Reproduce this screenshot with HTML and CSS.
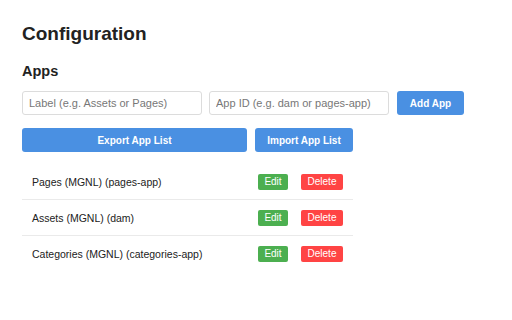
FILE: index.html
```html
<!DOCTYPE html>
<html>
<head>
<meta charset="utf-8">
<link rel="stylesheet" href="styles.css">
</head>
<body>
<div class="page">
  <h1 class="title">Configuration</h1>
  <h2 class="section">Apps</h2>
  <div class="form-row">
    <input class="field" type="text" placeholder="Label (e.g. Assets or Pages)">
    <input class="field field-id" type="text" placeholder="App ID (e.g. dam or pages-app)">
    <button class="btn btn-blue btn-add">Add App</button>
  </div>
  <div class="io-row">
    <button class="btn btn-blue btn-export">Export App List</button>
    <button class="btn btn-blue btn-import">Import App List</button>
  </div>
  <ul class="app-list">
    <li class="app-row">
      <span class="app-name">Pages (MGNL) (pages-app)</span>
      <div class="actions"><button class="btn btn-small btn-green">Edit</button><button class="btn btn-small btn-red">Delete</button></div>
    </li>
    <li class="app-row">
      <span class="app-name">Assets (MGNL) (dam)</span>
      <div class="actions"><button class="btn btn-small btn-green">Edit</button><button class="btn btn-small btn-red">Delete</button></div>
    </li>
    <li class="app-row last">
      <span class="app-name">Categories (MGNL) (categories-app)</span>
      <div class="actions"><button class="btn btn-small btn-green">Edit</button><button class="btn btn-small btn-red">Delete</button></div>
    </li>
  </ul>
</div>
</body>
</html>
```

FILE: styles.css
```css
* { box-sizing: border-box; }
html, body {
  margin: 0;
  padding: 0;
  background: #ffffff;
  font-family: "Liberation Sans", Arial, sans-serif;
  color: #222222;
}
.page {
  padding: 22px 0 0 22px;
}
.title {
  margin: 0;
  font-size: 19px;
  line-height: 24px;
  font-weight: bold;
  color: #222222;
}
.section {
  margin: 16px 0 0 0;
  font-size: 14.5px;
  line-height: 18px;
  font-weight: bold;
  color: #222222;
}
.form-row {
  display: flex;
  align-items: center;
  margin-top: 11px;
  height: 24px;
}
.field {
  width: 180px;
  height: 24px;
  border: 1px solid #dcdcdc;
  border-radius: 3px;
  padding: 0 6px;
  font-family: "Liberation Sans", Arial, sans-serif;
  font-size: 11px;
  color: #222;
  outline: none;
}
.field::placeholder { color: #777777; }
.field-id { margin-left: 7px; }
.btn {
  border: none;
  font-family: "Liberation Sans", Arial, sans-serif;
  color: #ffffff;
  cursor: pointer;
  padding: 0;
}
.btn-blue {
  background: #4a90e2;
  height: 24px;
  border-radius: 3px;
  font-size: 10px;
  font-weight: bold;
}
.btn-add {
  margin-left: 8px;
  width: 67px;
}
.io-row {
  display: flex;
  gap: 8px;
  margin-top: 13px;
}
.btn-export { width: 225px; }
.btn-import { width: 98px; }
.app-list {
  list-style: none;
  margin: 12px 0 0 0;
  padding: 0;
  width: 331px;
}
.app-row {
  display: flex;
  align-items: center;
  justify-content: space-between;
  padding: 10px 10px 9px 10px;
  border-bottom: 1px solid #eaeaea;
}
.app-row.last { border-bottom: none; }
.app-name {
  font-size: 10.5px;
  color: #222222;
}
.actions {
  display: flex;
  gap: 13px;
}
.btn-small {
  height: 16px;
  border-radius: 2px;
  font-size: 10px;
  padding: 0 6px;
  line-height: 16px;
}
.btn-green { background: #4caf50; width: 30px; }
.btn-red { background: #ff4444; width: 42px; }
```
